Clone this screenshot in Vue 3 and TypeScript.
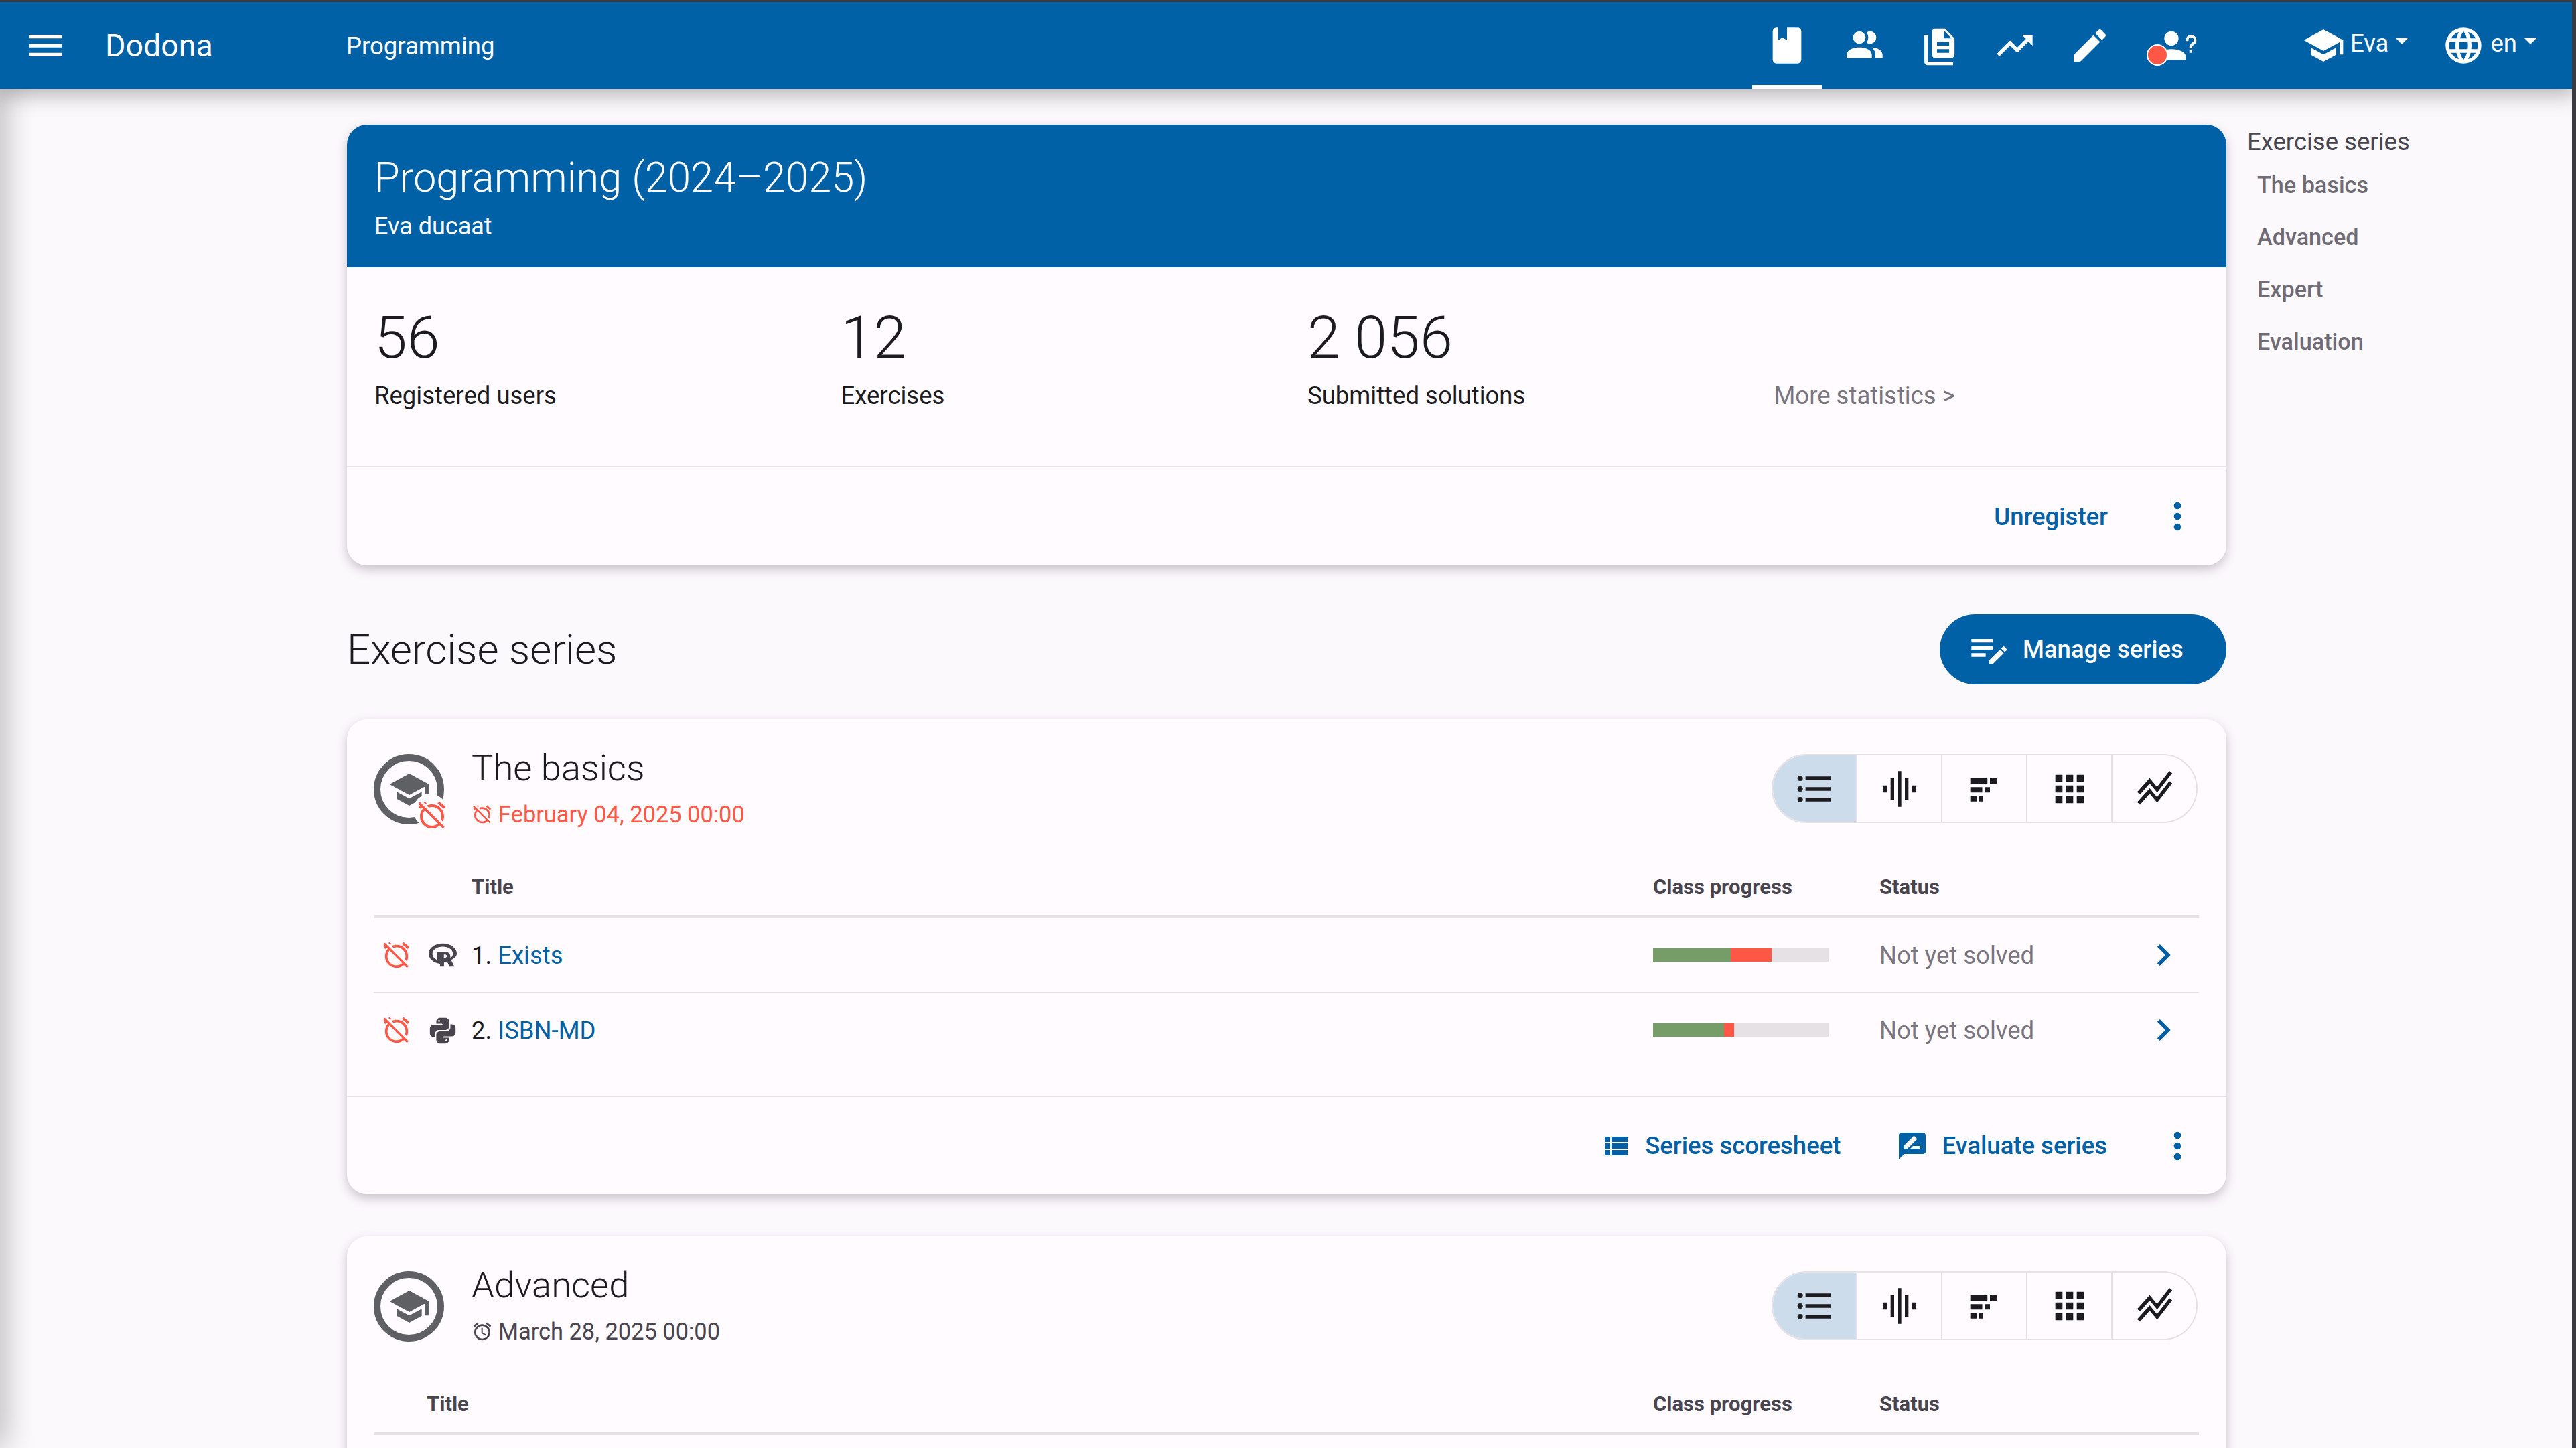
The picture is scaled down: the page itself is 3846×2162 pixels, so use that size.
<script setup lang="ts">
type Exercise = {
  index: number
  name: string
  lang: 'r' | 'python'
  done: number
  wrong: number
}

type Series = {
  name: string
  deadline: string
  late: boolean
  titleIndented: boolean
  exercises: Exercise[]
}

const stats = [
  { value: '56', label: 'Registered users' },
  { value: '12', label: 'Exercises' },
  { value: '2 056', label: 'Submitted solutions' },
]

const toc = ['The basics', 'Advanced', 'Expert', 'Evaluation']

const series: Series[] = [
  {
    name: 'The basics',
    deadline: 'February 04, 2025 00:00',
    late: true,
    titleIndented: true,
    exercises: [
      { index: 1, name: 'Exists', lang: 'r', done: 44.3, wrong: 23.2 },
      { index: 2, name: 'ISBN-MD', lang: 'python', done: 40.6, wrong: 5.6 },
    ],
  },
  {
    name: 'Advanced',
    deadline: 'March 28, 2025 00:00',
    late: false,
    titleIndented: false,
    exercises: [],
  },
]

const mdi = {
  menu: 'M3,6H21V8H3V6M3,11H21V13H3V11M3,16H21V18H3V16Z',
  book: 'M18,22A2,2 0 0,0 20,20V4C20,2.89 19.1,2 18,2H12V9L9.5,7.5L7,9V2H6A2,2 0 0,0 4,4V20A2,2 0 0,0 6,22H18Z',
  users:
    'M16 17V19H2V17S2 13 9 13 16 17 16 17M12.5 7.5A3.5 3.5 0 1 0 9 11A3.5 3.5 0 0 0 12.5 7.5M15.94 13A5.32 5.32 0 0 1 18 17V19H22V17S22 13.37 15.94 13M15 4A3.39 3.39 0 0 0 13.07 4.59A5 5 0 0 1 13.07 10.41A3.39 3.39 0 0 0 15 11A3.5 3.5 0 0 0 15 4Z',
  files:
    'M9.6 2.5H15L20.3 8V17C20.3 18.1 19.4 19 18.3 19H9.6C8.5 19 7.6 18.1 7.6 17V4.5C7.6 3.4 8.5 2.5 9.6 2.5ZM14.3 3.5V8H18.6ZM10.5 10H17.3V12H10.5ZM10.5 14H17.3V16H10.5ZM3.4 6H5.4V21H19.5V23H5.4C4.3 23 3.4 22.1 3.4 21Z',
  trending: 'M16,6L18.29,8.29L13.41,13.17L9.41,9.17L2,16.59L3.41,18L9.41,12L13.41,16L19.71,9.71L22,12V6H16Z',
  pencil:
    'M20.71,7.04C21.1,6.65 21.1,6 20.71,5.63L18.37,3.29C18,2.9 17.35,2.9 16.96,3.29L15.12,5.12L18.87,8.87M3,17.25V21H6.75L17.81,9.93L14.06,6.18L3,17.25Z',
  accountQuestion:
    'M13,8A4,4 0 0,1 9,12A4,4 0 0,1 5,8A4,4 0 0,1 9,4A4,4 0 0,1 13,8M17,18V20H1V18C1,15.79 4.58,14 9,14C13.42,14 17,15.79 17,18M20.5,14.5V16H19V14.5H20.5M18.5,9.5H17V9A3,3 0 0,1 20,6A3,3 0 0,1 23,9C23,9.97 22.5,10.88 21.71,11.41L21.41,11.6C20.84,12 20.5,12.61 20.5,13.3V13.5H19V13.3C19,12.11 19.6,11 20.59,10.35L20.88,10.16C21.27,9.9 21.5,9.47 21.5,9A1.5,1.5 0 0,0 20,7.5A1.5,1.5 0 0,0 18.5,9V9.5Z',
  school: 'M12,3L1,9L12,15L21,10.09V17H23V9M5,13.18V17.18L12,21L19,17.18V13.18L12,17L5,13.18Z',
  web: 'M16.36,14C16.44,13.34 16.5,12.68 16.5,12C16.5,11.32 16.44,10.66 16.36,10H19.74C19.9,10.64 20,11.31 20,12C20,12.69 19.9,13.36 19.74,14M14.59,19.56C15.19,18.45 15.65,17.25 15.97,16H18.92C17.96,17.65 16.43,18.93 14.59,19.56M14.34,14H9.66C9.56,13.34 9.5,12.68 9.5,12C9.5,11.32 9.56,10.65 9.66,10H14.34C14.43,10.65 14.5,11.32 14.5,12C14.5,12.68 14.43,13.34 14.34,14M12,19.96C11.17,18.76 10.5,17.43 10.09,16H13.91C13.5,17.43 12.83,18.76 12,19.96M8,8H5.08C6.03,6.34 7.57,5.06 9.4,4.44C8.8,5.55 8.35,6.75 8,8M5.08,16H8C8.35,17.25 8.8,18.45 9.4,19.56C7.57,18.93 6.03,17.65 5.08,16M4.26,14C4.1,13.36 4,12.69 4,12C4,11.31 4.1,10.64 4.26,10H7.64C7.56,10.66 7.5,11.32 7.5,12C7.5,12.68 7.56,13.34 7.64,14M12,4.03C12.83,5.23 13.5,6.57 13.91,8H10.09C10.5,6.57 11.17,5.23 12,4.03M18.92,8H15.97C15.65,6.75 15.19,5.55 14.59,4.44C16.43,5.07 17.96,6.34 18.92,8M12,2C6.47,2 2,6.5 2,12A10,10 0 0,0 12,22A10,10 0 0,0 22,12A10,10 0 0,0 12,2Z',
  dots: 'M12,16A2,2 0 0,1 14,18A2,2 0 0,1 12,20A2,2 0 0,1 10,18A2,2 0 0,1 12,16M12,10A2,2 0 0,1 14,12A2,2 0 0,1 12,14A2,2 0 0,1 10,12A2,2 0 0,1 12,10M12,4A2,2 0 0,1 14,6A2,2 0 0,1 12,8A2,2 0 0,1 10,6A2,2 0 0,1 12,4Z',
  playlistEdit:
    'M2,6V8H14V6H2M2,10V12H14V10H2M20.04,10.13C19.9,10.13 19.76,10.19 19.65,10.3L18.65,11.3L20.7,13.35L21.7,12.35C21.92,12.14 21.92,11.79 21.7,11.58L20.42,10.3C20.31,10.19 20.18,10.13 20.04,10.13M18.07,11.88L12,17.94V20H14.06L20.12,13.93L18.07,11.88M2,14V16H10V14H2Z',
  alarm:
    'M12,20A7,7 0 0,1 5,13A7,7 0 0,1 12,6A7,7 0 0,1 19,13A7,7 0 0,1 12,20M12,4A9,9 0 0,0 3,13A9,9 0 0,0 12,22A9,9 0 0,0 21,13A9,9 0 0,0 12,4M12.5,8H11V14L15.75,16.85L16.5,15.62L12.5,13.25V8M7.88,3.39L6.6,1.86L2,5.71L3.29,7.24L7.88,3.39M22,5.72L17.4,1.86L16.11,3.39L20.71,7.25L22,5.72Z',
  alarmOff:
    'M8,3.28L6.6,1.86L5.74,2.57L7.16,4M16.47,18.39C15.26,19.39 13.7,20 12,20A7,7 0 0,1 5,13C5,11.3 5.61,9.74 6.61,8.53M2.92,2.29L1.65,3.57L3,4.9L1.87,5.83L3.29,7.25L4.4,6.31L5.2,7.11C3.83,8.69 3,10.75 3,13A9,9 0 0,0 12,22C14.25,22 16.31,21.17 17.89,19.8L20.09,22L21.36,20.73L3.89,3.27L2.92,2.29M22,5.72L17.4,1.86L16.11,3.39L20.71,7.25L22,5.72M12,6A7,7 0 0,1 19,13C19,13.84 18.84,14.65 18.57,15.4L20.09,16.92C20.67,15.73 21,14.41 21,13A9,9 0 0,0 12,4C10.59,4 9.27,4.33 8.08,4.91L9.6,6.43C10.35,6.16 11.16,6 12,6Z',
  r: 'M12,3C5.93,3 1,6.58 1,11C1,14.9 4.83,18.15 9.9,18.85V21H13V17.2H14.5C15.2,17.2 15.7,17.6 16,18.3L17.2,21H21L19.3,17.3C19,16.7 18.7,16.3 18.2,16.05C20.9,14.8 23,13.1 23,11C23,6.58 18.07,3 12,3M12,5.5C16.4,5.5 20,7.9 20,11C20,12.4 19.1,13.7 17.8,14.6C17.9,14.2 18,13.8 18,13.4C18,11 16.2,9.4 13.4,9.4H7.6V15.9C5.4,14.9 4,13.1 4,11C4,7.9 7.6,5.5 12,5.5M12.9,11.6H14C14.8,11.6 15.2,12.1 15.2,12.8C15.2,13.5 14.8,14.1 14,14.1H12.9V11.6Z',
  python:
    'M19.14,7.5A2.86,2.86 0 0,1 22,10.36V14.14A2.86,2.86 0 0,1 19.14,17H12C12,17.39 12.32,17.96 12.71,17.96H17V19.64A2.86,2.86 0 0,1 14.14,22.5H9.86A2.86,2.86 0 0,1 7,19.64V15.89C7,14.31 8.28,13.04 9.86,13.04H15.11C16.69,13.04 17.96,11.76 17.96,10.18V7.5H19.14M14.86,19.29C14.46,19.29 14.14,19.59 14.14,20.18C14.14,20.77 14.46,20.89 14.86,20.89A0.71,0.71 0 0,0 15.57,20.18C15.57,19.59 15.25,19.29 14.86,19.29M4.86,17.5C3.28,17.5 2,16.22 2,14.64V10.86C2,9.28 3.28,8 4.86,8H12C12,7.61 11.68,7.04 11.29,7.04H7V5.36C7,3.78 8.28,2.5 9.86,2.5H14.14C15.72,2.5 17,3.78 17,5.36V9.11C17,10.69 15.72,11.96 14.14,11.96H8.89C7.31,11.96 6.04,13.24 6.04,14.82V17.5H4.86M9.14,5.71C9.54,5.71 9.86,5.41 9.86,4.82C9.86,4.23 9.54,4.11 9.14,4.11C8.75,4.11 8.43,4.23 8.43,4.82C8.43,5.41 8.75,5.71 9.14,5.71Z',
  chevron: 'M8.59,16.58L13.17,12L8.59,7.41L10,6L16,12L10,18L8.59,16.58Z',
  scoresheet: 'M9,5V9H21V5M9,19H21V15H9M9,14H21V10H9M4,9H8V5H4M4,19H8V15H4M4,14H8V10H4V14Z',
  evaluate:
    'M18,14H10.5L12.5,12H18M6,14V11.5L12.88,4.64C13.07,4.45 13.39,4.45 13.59,4.64L15.35,6.41C15.55,6.61 15.55,6.92 15.35,7.12L8.47,14M20,2H4A2,2 0 0,0 2,4V22L6,18H20A2,2 0 0,0 22,16V4C22,2.89 21.1,2 20,2Z',
  list: 'M7,5H21V7H7V5M7,13V11H21V13H7M4,4.5A1.5,1.5 0 0,1 5.5,6A1.5,1.5 0 0,1 4,7.5A1.5,1.5 0 0,1 2.5,6A1.5,1.5 0 0,1 4,4.5M4,10.5A1.5,1.5 0 0,1 5.5,12A1.5,1.5 0 0,1 4,13.5A1.5,1.5 0 0,1 2.5,12A1.5,1.5 0 0,1 4,10.5M7,19V17H21V19H7M4,16.5A1.5,1.5 0 0,1 5.5,18A1.5,1.5 0 0,1 4,19.5A1.5,1.5 0 0,1 2.5,18A1.5,1.5 0 0,1 4,16.5Z',
  wave: 'M3 10h2v4H3zM7 6h2v12H7zM11 2h2v20h-2zM15 6h2v12h-2zM19 10h2v4h-2z',
  bars: 'M4 6h9.6v3H4zM15 6h4v3h-4zM4 11h6.7v3H4zM12 11h3v3h-3zM4 16h3.7v3H4zM9 16h2v3H9z',
  grid: 'M4 4h4v4H4zM10 4h4v4h-4zM16 4h4v4h-4zM4 10h4v4H4zM10 10h4v4h-4zM16 10h4v4h-4zM4 16h4v4H4zM10 16h4v4h-4zM16 16h4v4h-4z',
  zigzag:
    'M2.2 13.7 9.2 5.9 13.3 10.9 20.2 1.9 21.8 3.1 13.4 14 9.2 8.9 3.8 15.1zM2.2 19.4 9.2 11.6 13.3 16.6 20.2 7.6 21.8 8.8 13.4 19.7 9.2 14.6 3.8 20.8z',
}

const navIcons = [mdi.book, mdi.users, mdi.files, mdi.trending, mdi.pencil]
const viewIcons = [mdi.list, mdi.wave, mdi.bars, mdi.grid, mdi.zigzag]
</script>

<template>
  <div class="page">
    <header class="navbar">
      <svg class="menu" viewBox="0 0 24 24"><path :d="mdi.menu" /></svg>
      <span class="brand">Dodona</span>
      <span class="crumb">Programming</span>
      <nav class="nav-icons">
        <span v-for="(d, i) in navIcons" :key="i" class="nav-icon" :class="{ active: i === 0 }">
          <svg viewBox="0 0 24 24"><path :d="d" fill-rule="evenodd" /></svg>
        </span>
        <span class="nav-icon help">
          <svg viewBox="0 0 24 24"><path :d="mdi.accountQuestion" /></svg>
          <i class="dot" />
        </span>
      </nav>
      <div class="nav-menu user">
        <svg viewBox="0 0 24 24"><path :d="mdi.school" /></svg>
        <span>Eva</span>
        <i class="caret" />
      </div>
      <div class="nav-menu lang">
        <svg viewBox="0 0 24 24"><path :d="mdi.web" /></svg>
        <span>en</span>
        <i class="caret" />
      </div>
    </header>

    <div class="body">
      <main class="main">
        <section class="card course">
          <div class="course-head">
            <h1>Programming (2024–2025)</h1>
            <p>Eva ducaat</p>
          </div>
          <div class="stats">
            <div v-for="s in stats" :key="s.label" class="stat">
              <div class="stat-value">{{ s.value }}</div>
              <div class="stat-label">{{ s.label }}</div>
            </div>
            <div class="stat">
              <div class="stat-value">&nbsp;</div>
              <div class="stat-label more">More statistics &gt;</div>
            </div>
          </div>
          <div class="card-actions">
            <a class="action">Unregister</a>
            <svg class="more-icon" viewBox="0 0 24 24"><path :d="mdi.dots" /></svg>
          </div>
        </section>

        <div class="section-head">
          <h2>Exercise series</h2>
          <button class="manage">
            <svg viewBox="0 0 24 24"><path :d="mdi.playlistEdit" /></svg>
            Manage series
          </button>
        </div>

        <section v-for="s in series" :key="s.name" class="card series">
          <div class="series-head">
            <div class="series-icon" :class="{ late: s.late }">
              <svg class="school" viewBox="0 0 24 24"><path :d="mdi.school" /></svg>
              <svg v-if="s.late" class="badge" viewBox="0 0 24 24"><path :d="mdi.alarmOff" /></svg>
            </div>
            <div class="series-title">
              <h3>{{ s.name }}</h3>
              <div class="deadline" :class="{ late: s.late }">
                <svg viewBox="0 0 24 24"><path :d="s.late ? mdi.alarmOff : mdi.alarm" /></svg>
                {{ s.deadline }}
              </div>
            </div>
            <div class="views">
              <span v-for="(d, i) in viewIcons" :key="i" class="view" :class="{ selected: i === 0 }">
                <svg viewBox="0 0 24 24"><path :d="d" /></svg>
              </span>
            </div>
          </div>

          <div class="table">
            <div class="thead" :class="{ indented: s.titleIndented }">
              <span class="th-title">Title</span>
              <span class="th-progress">Class progress</span>
              <span class="th-status">Status</span>
            </div>
            <div v-for="e in s.exercises" :key="e.index" class="row">
              <svg class="row-alarm" viewBox="0 0 24 24"><path :d="mdi.alarmOff" /></svg>
              <svg class="row-lang" viewBox="0 0 24 24"><path :d="e.lang === 'r' ? mdi.r : mdi.python" /></svg>
              <span class="row-name">{{ e.index }}. <a>{{ e.name }}</a></span>
              <span class="progress">
                <i class="ok" :style="{ width: `${e.done}%` }" />
                <i class="bad" :style="{ width: `${e.wrong}%` }" />
              </span>
              <span class="row-status">Not yet solved</span>
              <svg class="row-chevron" viewBox="0 0 24 24"><path :d="mdi.chevron" /></svg>
            </div>
          </div>

          <div v-if="s.exercises.length" class="card-actions series-actions">
            <a class="action with-icon scoresheet">
              <svg viewBox="0 0 24 24"><path :d="mdi.scoresheet" /></svg>
              Series scoresheet
            </a>
            <a class="action with-icon">
              <svg viewBox="0 0 24 24"><path :d="mdi.evaluate" /></svg>
              Evaluate series
            </a>
            <svg class="more-icon" viewBox="0 0 24 24"><path :d="mdi.dots" /></svg>
          </div>
        </section>
      </main>

      <aside class="toc">
        <div class="toc-title">Exercise series</div>
        <a v-for="t in toc" :key="t" class="toc-item">{{ t }}</a>
      </aside>
    </div>
    <div class="edge" />
  </div>
</template>

<style>
html,
body {
  margin: 0;
  background: #fdf9fe;
  overflow: hidden;
}
</style>

<style scoped>
.page {
  position: relative;
  width: 3846px;
  height: 2162px;
  overflow: hidden;
  background: #fcf9fd;
  color: #1c1b1f;
  font-family: Roboto, "Liberation Sans", sans-serif;
  font-size: 36.5px;
  border-top: 3px solid #3a3a40;
  box-sizing: border-box;
}

svg {
  display: block;
  fill: currentColor;
  flex: none;
}

h1,
h2,
h3,
p {
  margin: 0;
  font-weight: 300;
}

/* navbar */
.navbar {
  position: relative;
  z-index: 2;
  display: flex;
  align-items: center;
  height: 130px;
  background: #0061a6;
  color: #fff;
  box-shadow: 0 8px 30px rgba(0, 0, 0, 0.3);
}

.menu {
  width: 64px;
  height: 64px;
  margin-left: 36px;
}

.brand {
  margin-left: 57px;
  width: 360px;
  font-size: 46.5px;
}

.nav-icons {
  display: flex;
  margin-left: auto;
  align-self: stretch;
}

.nav-icon {
  position: relative;
  display: flex;
  align-items: center;
  justify-content: center;
  width: 112px;
  box-sizing: border-box;
}

.nav-icon svg {
  width: 64px;
  height: 64px;
}

.nav-icon.active {
  width: 104px;
  margin-right: 8px;
  border-bottom: 6px solid #fff;
  padding-top: 6px;
}

.nav-icon.help {
  margin-left: 18px;
}

.dot {
  position: absolute;
  left: 11px;
  top: 63px;
  width: 28px;
  height: 28px;
  border-radius: 50%;
  background: #ff5745;
  border: 2px solid #fff;
}

.nav-menu {
  display: flex;
  align-items: center;
  gap: 8px;
}

.nav-menu svg {
  width: 64px;
  height: 64px;
}

.nav-menu span {
  margin-bottom: 8px;
}

.caret {
  width: 0;
  height: 0;
  border-left: 10px solid transparent;
  border-right: 10px solid transparent;
  border-top: 10px solid #fff;
  margin-left: 2px;
  margin-bottom: 14px;
}

.user {
  margin-left: 131px;
}

.lang {
  margin-left: 50px;
  margin-right: 58px;
}

/* layout */
.body {
  display: flex;
  align-items: flex-start;
  padding-left: 518px;
  gap: 31px;
}

.main {
  width: 2806px;
  flex: none;
  padding-top: 53px;
}

.card {
  background: #fffbff;
  border-radius: 30px;
  box-shadow: 0 6px 16px rgba(60, 50, 60, 0.28);
  overflow: hidden;
}

/* course card */
.course-head {
  height: 213px;
  box-sizing: border-box;
  padding: 40px 41px 0;
  background: #0061a6;
  color: #fff;
}

.course-head h1 {
  font-size: 61.4px;
  line-height: 78px;
}

.course-head p {
  margin-top: 11px;
  font-size: 36px;
  font-weight: 400;
  line-height: 46px;
}

.stats {
  display: grid;
  grid-template-columns: repeat(4, 696.5px);
  padding: 52px 0 0 41px;
  height: 299px;
  box-sizing: border-box;
  border-bottom: 2px solid #e6e1e5;
}

.stat-value {
  font-size: 88px;
  font-weight: 300;
  line-height: 106px;
}

.stat-label {
  margin-top: 11px;
  line-height: 46px;
}

.more {
  color: #79747e;
}

.card-actions {
  display: flex;
  align-items: center;
  justify-content: flex-end;
  height: 146px;
  padding-right: 41px;
}

.action {
  display: flex;
  align-items: center;
  color: #0061a6;
  font-weight: 500;
  margin-right: 72px;
}

.more-icon {
  width: 64px;
  height: 64px;
  color: #0061a6;
}

/* section head */
.section-head {
  display: flex;
  align-items: center;
  justify-content: space-between;
  margin-top: 73px;
  margin-bottom: 52px;
}

.section-head h2 {
  font-size: 62px;
}

.manage {
  display: flex;
  align-items: center;
  gap: 26px;
  height: 105px;
  width: 428px;
  box-sizing: border-box;
  padding: 0 0 0 42px;
  border: 0;
  border-radius: 53px;
  background: #0061a6;
  color: #fff;
  font: inherit;
  font-weight: 500;
}

.manage svg {
  width: 64px;
  height: 64px;
  margin-right: -8px;
}

/* series card */
.series {
  min-height: 709px;
  margin-bottom: 63px;
}

.series-head {
  display: flex;
  align-items: flex-start;
  height: 160px;
  box-sizing: border-box;
  padding: 52px 43px 0 40px;
}

.series-icon {
  position: relative;
  display: flex;
  align-items: center;
  justify-content: center;
  width: 105px;
  height: 105px;
  box-sizing: border-box;
  border: 10px solid #5f6063;
  border-radius: 50%;
  color: #5f6063;
  flex: none;
}

.series-icon .school {
  width: 64px;
  height: 64px;
  flex: none;
}

.series-icon.late::after {
  content: "";
  position: absolute;
  right: -14px;
  bottom: -14px;
  width: 50px;
  height: 50px;
  border-radius: 50%;
  background: #fffbff;
}

.badge {
  position: absolute;
  z-index: 1;
  right: -16px;
  bottom: -20px;
  width: 48px;
  height: 48px;
  color: #ff5745;
}

.series-title {
  margin-left: 41px;
  flex: 1;
}

.series-title h3 {
  font-size: 54.4px;
  line-height: 70px;
  margin-top: -14px;
}

.deadline {
  display: flex;
  align-items: center;
  gap: 8px;
  margin-top: 11px;
  color: #49454f;
  font-size: 34.4px;
  line-height: 46px;
}

.deadline.late {
  color: #ff5745;
}

.deadline svg {
  width: 32px;
  height: 32px;
}

.views {
  display: flex;
  height: 103px;
  box-sizing: border-box;
  border: 2.5px solid #e6e1e5;
  border-radius: 52px;
  overflow: hidden;
}

.view {
  display: flex;
  align-items: center;
  justify-content: center;
  width: 127px;
  box-sizing: border-box;
  border-left: 2px solid #e6e1e5;
}

.view:first-child {
  width: 124.5px;
  border-left: 0;
  background: #cddcea;
}

.view svg {
  width: 64px;
  height: 64px;
}

/* table */
.table {
  margin: 0 41px 0 40px;
}

.thead {
  position: relative;
  display: flex;
  align-items: center;
  height: 137px;
  padding-top: 48px;
  box-sizing: border-box;
  border-bottom: 5px solid #e6e1e5;
  color: #49454f;
  font-size: 31px;
  font-weight: 700;
}

.th-title {
  margin-left: 79px;
  width: 1831px;
}

.thead.indented .th-title {
  margin-left: 146px;
  width: 1764px;
}

.th-progress {
  width: 338px;
}

.row {
  display: flex;
  align-items: center;
  height: 112px;
  box-sizing: border-box;
  border-bottom: 2px solid #e6e1e5;
}

.row:last-child {
  height: 110px;
  border-bottom: 0;
}

.row-alarm {
  width: 46px;
  height: 46px;
  margin-left: 11px;
  color: #ff5745;
}

.row-lang {
  width: 46px;
  height: 46px;
  margin-left: 23px;
  color: #49454f;
}

.row-name {
  width: 1764px;
  margin-left: 20px;
}

.row-name a {
  color: #0061a6;
}

.progress {
  display: flex;
  width: 262px;
  height: 20px;
  margin-right: 76px;
  background: #e6e1e5;
}

.progress i {
  display: block;
  height: 100%;
}

.ok {
  background: #769c68;
}

.bad {
  background: #ff5745;
}

.row-status {
  width: 392px;
  color: #79747e;
}

.row-chevron {
  width: 64px;
  height: 64px;
  color: #0061a6;
}

.series-actions {
  height: 145px;
  margin-top: 43px;
  border-top: 2px solid #e6e1e5;
}

.with-icon {
  gap: 20px;
  margin-right: 73px;
}

.with-icon svg {
  width: 48px;
  height: 48px;
}

.scoresheet {
  margin-right: 83px;
}

/* toc */
.toc {
  padding-top: 56px;
  width: 400px;
}

.toc-title {
  line-height: 46px;
  color: #49454f;
}

.toc-item {
  display: block;
  margin-left: 15px;
  margin-top: 32px;
  font-size: 34.2px;
  font-weight: 500;
  line-height: 46px;
  color: #706c76;
}

.toc-title + .toc-item {
  margin-top: 18px;
}

.edge {
  position: absolute;
  top: 0;
  right: 0;
  bottom: 0;
  width: 6px;
  background: #3a3a40;
  z-index: 3;
}

.page::before {
  content: "";
  position: absolute;
  left: -30px;
  top: 0;
  bottom: 0;
  width: 30px;
  box-shadow: 0 0 50px rgba(0, 0, 0, 0.4);
}
</style>
